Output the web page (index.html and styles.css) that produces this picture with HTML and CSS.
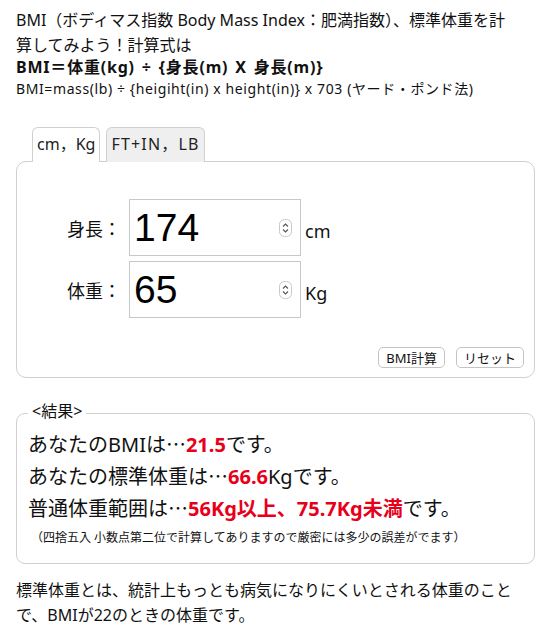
FILE: index.html
```html
<!DOCTYPE html>
<html lang="ja">
<head>
  <meta charset="UTF-8" />
  <meta name="viewport" content="width=device-width, initial-scale=1.0" />
  <title>BMI計算</title>
  <link rel="stylesheet" href="styles.css">
</head>
<body>
  <div class="intro">
    <p class="lead">BMI（ボディマス指数 Body Mass Index：肥満指数）、標準体重を計算してみよう！計算式は</p>
    <p class="formula">BMI＝体重(kg) ÷ {身長(m) X 身長(m)}</p>
    <p class="formula-lb">BMI=mass(lb) ÷ {heigiht(in) x height(in)} x 703 (ヤード・ポンド法)</p>
  </div>

  <!-- Tabs -->
  <div class="tabs">
    <ul class="tab-list">
      <li class="tab active">cm，Kg</li>
      <li class="tab">FT+IN，LB</li>
    </ul>
    <div class="panel">
      <div class="row">
        <span class="label">身長：</span>
        <div class="num">174
          <svg class="spin" width="13" height="18" viewBox="0 0 13 18"><rect x="0.5" y="0.5" width="12" height="17" rx="5" fill="#fff" stroke="#c8c8c8"/><path d="M4 7.5 6.5 5 9 7.5M4 10.5 6.5 13 9 10.5" fill="none" stroke="#555" stroke-width="1.1"/></svg>
        </div>
        <span class="unit">cm</span>
      </div>
      <div class="row">
        <span class="label">体重：</span>
        <div class="num">65
          <svg class="spin" width="13" height="18" viewBox="0 0 13 18"><rect x="0.5" y="0.5" width="12" height="17" rx="5" fill="#fff" stroke="#c8c8c8"/><path d="M4 7.5 6.5 5 9 7.5M4 10.5 6.5 13 9 10.5" fill="none" stroke="#555" stroke-width="1.1"/></svg>
        </div>
        <span class="unit">Kg</span>
      </div>
      <div class="actions">
        <button class="button">BMI計算</button>
        <button class="button">リセット</button>
      </div>
    </div>
  </div>

  <!-- Result -->
  <fieldset class="result">
    <legend>&lt;結果&gt;</legend>
    <p class="line">あなたのBMIは<span class="dots">…</span><b class="hl">21.5</b>です。</p>
    <p class="line">あなたの標準体重は<span class="dots">…</span><b class="hl">66.6</b>Kgです。</p>
    <p class="line">普通体重範囲は<span class="dots">…</span><b class="hl">56Kg以上、75.7Kg未満</b>です。</p>
    <p class="note">（四捨五入 小数点第二位で計算してありますので厳密には多少の誤差がでます）</p>
  </fieldset>

  <p class="about">標準体重とは、統計上もっとも病気になりにくいとされる体重のことで、BMIが22のときの体重です。</p>
</body>
</html>
```

FILE: styles.css
```css
body {
  margin: 0;
  padding: 8px 20px 0 16px;
  background: #fff;
  color: #111;
  font-family: "Noto Sans", "Noto Sans CJK JP", sans-serif;
  font-size: 16px;
}

p {
  margin: 0;
}

.lead {
  line-height: 25px;
  padding-right: 20px;
}

.formula {
  font-weight: bold;
  line-height: 20px;
  margin-top: -1px;
  letter-spacing: 0.8px;
  word-spacing: 2px;
}

.formula-lb {
  font-size: 14px;
  line-height: 20px;
  margin-top: 2px;
  letter-spacing: 0.6px;
}

/* tabs */
.tabs {
  margin-top: 27px;
}

.tab-list {
  list-style: none;
  margin: 0;
  padding: 0 0 0 16px;
  display: flex;
  gap: 6px;
}

.tab {
  height: 34px;
  line-height: 33px;
  padding: 0 4px;
  border: 1px solid #d0d0d0;
  border-bottom: none;
  border-radius: 6px 6px 0 0;
  background: #efefef;
  color: #222;
  position: relative;
  top: 1px;
}

.tab + .tab {
  letter-spacing: 1.2px;
}

.tab.active {
  background: #fff;
}

.panel {
  border: 1px solid #d0d0d0;
  border-radius: 10px;
  padding: 37px 10px 9px;
}

.row {
  display: flex;
  align-items: center;
  padding-left: 40px;
  margin-bottom: 5px;
}

.label {
  font-size: 18px;
  width: 62px;
}

.num {
  width: 158px;
  height: 55px;
  border: 1px solid #c8c8c8;
  display: flex;
  align-items: center;
  justify-content: space-between;
  padding: 0 8px 0 4px;
  font-family: "Liberation Sans", Arial, sans-serif;
  font-size: 39px;
  color: #000;
  margin-right: 4px;
}

.spin {
  display: block;
}

.unit {
  font-size: 18px;
  padding-top: 6px;
}

.actions {
  display: flex;
  justify-content: flex-end;
  gap: 11px;
  margin-top: 29px;
}

.button {
  font-family: "Noto Sans", "Noto Sans CJK JP", sans-serif;
  font-size: 13px;
  height: 21px;
  padding: 0 7px;
  background: #fff;
  border: 1px solid #c4c4c4;
  border-radius: 5px;
  color: #111;
}

/* result */
.result {
  margin: 23px 0 0;
  border: 1px solid #d0d0d0;
  border-radius: 9px;
  padding: 3px 11px 17px;
}

.result legend {
  padding: 0 4px;
  font-size: 16px;
  position: relative;
  top: -3px;
}

.line {
  font-size: 20px;
  line-height: 31px;
}

.dots {
  font-family: "Noto Sans CJK JP", sans-serif;
}

.hl {
  color: #e8001a;
}

.note {
  font-size: 12px;
  margin-top: 4px;
  padding-left: 3px;
}

.about {
  margin-top: 14px;
  line-height: 25px;
}
```
